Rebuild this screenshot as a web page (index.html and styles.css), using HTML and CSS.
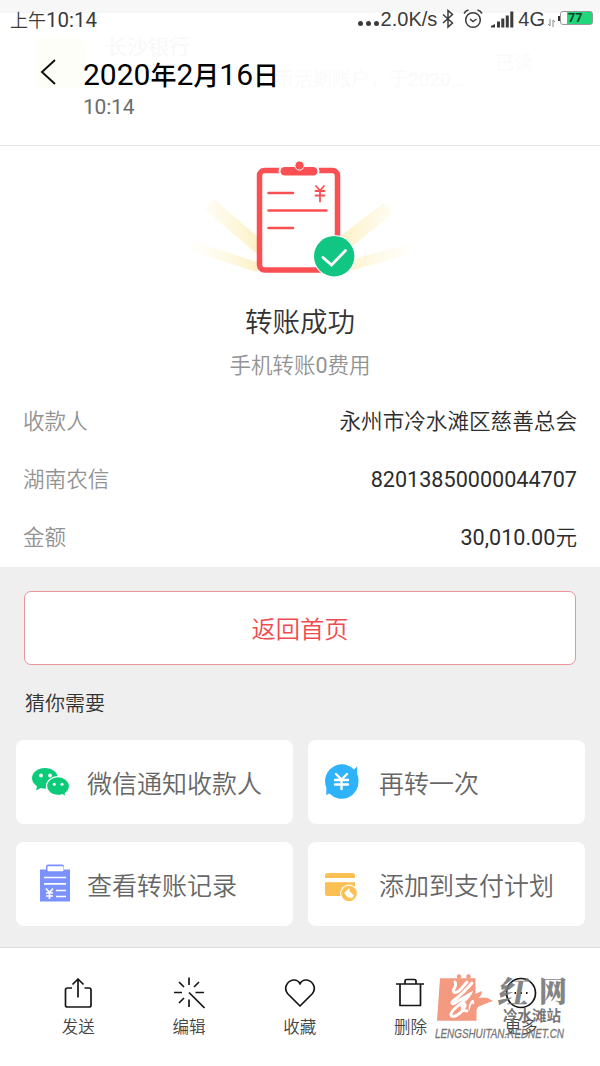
FILE: index.html
```html
<!DOCTYPE html>
<html lang="zh-CN">
<head>
<meta charset="utf-8">
<title>转账成功</title>
<link rel="stylesheet" href="styles.css">
</head>
<body>
<div class="screen">
  <header class="head">
    <div class="ghost" aria-hidden="true">
      <div class="ghost-icon"></div>
      <div class="ghost-title">长沙银行</div>
      <div class="ghost-read">已读</div>
      <div class="ghost-text">币活期账户，于2020...</div>
    </div>
    <div class="status">
      <span class="clock">上午<b>10:14</b></span>
      <span class="dots"><i></i><i></i><i></i></span>
      <span class="speed">2.0K/s</span>
      <svg class="bt" width="12" height="20" viewBox="0 0 12 20"><path d="M1 5.500 10.500 14 6 18V1.500L10.500 5.500 1 14"/></svg>
      <svg class="alarm" width="20" height="20" viewBox="0 0 20 20"><circle cx="10" cy="11" r="7.300"/><path d="M1 4.500C2 2.800 3.500 1.500 5.500 1M19 4.500C18 2.800 16.500 1.500 14.500 1M7 10l3 2.500 3.500-2.500"/></svg>
      <svg class="signal" width="23" height="17" viewBox="0 0 23 17"><path d="M0 16.500v-1.500l4-2v3.500zM6 16.500v-6h3v6zM10.300 16.500v-9h3v9zM14.800 16.500v-12h3v12zM19.300 16.500v-16h3v16z"/></svg>
      <span class="net">4G</span>
      <svg class="arrows" width="7" height="8" viewBox="0 0 7 8"><path d="M2 0v7L0 5M5 8V1l2 2"/></svg>
      <span class="nub"></span>
      <span class="battery"><span class="level">77</span></span>
    </div>
    <div class="titlebar">
      <svg class="back" width="18" height="28" viewBox="0 0 18 28"><path d="M16 2 3 14l13 12"/></svg>
      <div>
        <div class="date"><b>2020</b>年<b>2</b>月<b>16</b>日</div>
        <div class="time">10:14</div>
      </div>
    </div>
  </header>

  <main>
    <section class="result">
      <svg class="art" width="240" height="130" viewBox="0 0 240 130">
        <defs>
          <linearGradient id="rayL" x1="0" x2="1"><stop offset="0" stop-color="#fff8dc" stop-opacity="0"/><stop offset="1" stop-color="#fcf1c6"/></linearGradient>
          <linearGradient id="rayR" x1="1" x2="0"><stop offset="0" stop-color="#fff8dc" stop-opacity="0"/><stop offset="1" stop-color="#fcf1c6"/></linearGradient>
        </defs>
        <path fill="url(#rayL)" d="M24 59 34 49 77 86V104zM7 89 10 101 77 122V112z"/>
        <path fill="url(#rayR)" d="M214 63 203 53 161 86V105zM233 93 236 103 161 123V112z"/>
        <rect x="79.500" y="20.500" width="78" height="99.500" rx="5" fill="#fff" stroke="#fa5054" stroke-width="5.500"/>
        <rect x="98.500" y="14" width="41" height="14" rx="7" fill="#fff"/>
        <circle cx="119.500" cy="15.500" r="5" fill="#fff"/>
        <rect x="100.500" y="17" width="37" height="8.500" rx="4.250" fill="#fa5054"/>
        <circle cx="119.500" cy="15.500" r="4.600" fill="#fa5054" stroke="#fff" stroke-width="1"/>
        <g fill="none" stroke="#fa5054" stroke-width="2.600" stroke-linecap="round"><path d="M88.500 43H113M88.500 60.500H146.500M88.500 78H113"/><path stroke-width="1.800" d="M136 36l4 4.500 4-4.500M140 40.500v11M135.500 41h9M135.500 45.500h9"/></g>
        <circle cx="154.200" cy="106.200" r="21.300" fill="#fff"/>
        <circle cx="154.200" cy="106.200" r="20.200" fill="#11c583"/>
        <path d="M143 107.500l8.500 7.500L165.500 100.500" fill="none" stroke="#fff" stroke-width="2.800" stroke-linecap="round"/>
      </svg>
      <h1>转账成功</h1>
      <p class="fee">手机转账<b>0</b>费用</p>
      <dl class="details">
        <div><dt>收款人</dt><dd>永州市冷水滩区慈善总会</dd></div>
        <div><dt>湖南农信</dt><dd><b>82013850000044707</b></dd></div>
        <div><dt>金额</dt><dd><b>30,010.00</b>元</dd></div>
      </dl>
    </section>

    <section class="next">
      <button class="home">返回首页</button>
      <h2>猜你需要</h2>
      <div class="cards">
        <div class="card"><svg width="48" height="44" viewBox="0 -1.500 48 44"><g fill="#0bcb78"><path d="M21 6.500c7.200 0 13 4.600 13 10.300S28.200 27 21 27c-1.500 0-3-.2-4.300-.6L12 29l1-4.300C10 22.800 8 20 8 16.800 8 11.100 13.800 6.500 21 6.500z"/><path stroke="#fff" stroke-width="1.200" d="M34 15.200c6.400 0 11.500 4.200 11.500 9.400 0 3-1.700 5.600-4.300 7.300l1 3.500-4-2.200c-1.300.4-2.700.7-4.200.7-6.400 0-11.500-4.200-11.500-9.300s5.100-9.400 11.500-9.400z"/></g><g fill="#fff"><circle cx="17" cy="14" r="1.900"/><circle cx="26" cy="14" r="1.900"/><circle cx="30.300" cy="22.700" r="1.500"/><circle cx="38" cy="22.700" r="1.500"/></g></svg><span>微信通知收款人</span></div>
        <div class="card"><svg width="48" height="44" viewBox="0 -1 48 44"><path fill="#2eb3fb" d="M25.500 3.300c5 0 9.300 2 12.400 5.300l3.300-3.100v7.500c1 2.300 1.300 4.300 1.300 7A16.800 16.800 0 0 1 13.500 32.500L10.300 34v-7.500A16.800 16.800 0 0 1 25.500 3.300z"/><path d="M20 13l5.500 5.500 5.500-5.500M25.500 18.500V28M19 19h13M19 23.500h13" fill="none" stroke="#fff" stroke-width="2.400" stroke-linecap="round"/></svg><span>再转一次</span></div>
        <div class="card"><svg width="48" height="44" viewBox="1 0 48 44"><path fill="#7b91fd" d="M17 7.500h6V4.500q0-2 2-2h14q2 0 2 2v3h6v32H17z"/><rect x="24.500" y="4.200" width="16" height="5" rx="1" fill="#fff"/><path d="M21 15.500h22M21 21.800h22M33 28.500h10M33 34.500h10M23 26.500l3.500 4 3.500-4M26.500 30.500v6.500M23 31h7M23 34h7" fill="none" stroke="#fff" stroke-width="1.700"/></svg><span>查看转账记录</span></div>
        <div class="card"><svg width="48" height="44" viewBox="0 0 48 44"><path fill="#fcbf52" d="M9 16v-2.500q0-2.500 2.500-2.500h25q2.500 0 2.500 2.500V16zM9 20.300h30V34H11.500Q9 34 9 31.500z"/><circle cx="33" cy="31.500" r="9" fill="#fff"/><circle cx="33" cy="31.500" r="7.800" fill="#fcbf52"/><path fill="#fff" d="M28 31l5.500-5v3.200l4.500 4.300-2 3-2.500-2v2.500z"/></svg><span>添加到支付计划</span></div>
      </div>
    </section>
  </main>

  <nav class="tabs">
    <div class="tab"><svg width="32" height="32" viewBox="0 0 32 32"><path d="M10 11H5.500Q3.500 11 3.500 13V28.500Q3.500 30 5.500 30H27Q29 30 29 28.500V13Q29 11 27 11h-4.500M16 20.500V2M10.500 7.500 16 2l5.500 5.500"/></svg><span>发送</span></div>
    <div class="tab"><svg width="32" height="32" viewBox="0 0 32 32"><path d="M16 .5v7.500M6 5l5 5M26 5l-5 5M1 15.500h8M22.500 15.500H31M6 26l5-5M16 22.500V30M16 15.500 31.500 31"/></svg><span>编辑</span></div>
    <div class="tab"><svg width="32" height="32" viewBox="0 0 32 32"><path d="M16 29 3.500 16.500C-1.500 9.500 5 3 10 3c3 0 5 1.500 6 4 1-2.500 3-4 6-4 5 0 11.500 6.500 6.500 13.500z"/></svg><span>收藏</span></div>
    <div class="tab"><svg width="32" height="32" viewBox="0 0 32 32"><path d="M2 7H30M11 7V4Q11 2.500 12.500 2.500h7.500Q22 2.500 22 4V7M6 7V28.500H26.500V7"/></svg><span>删除</span></div>
    <div class="tab"><svg width="32" height="32" viewBox="0 0 32 32"><circle cx="16" cy="16" r="14.500"/><path stroke-width="2" d="M9.500 16h1.500M15 16h2M21 16h1.500"/></svg><span>更多</span></div>
  </nav>

  <div class="watermark">
    <svg width="60" height="50" viewBox="0 0 60 50"><path fill="#f49a80" d="M5 5.300h35.500V21l6-3c1 3-1 5-3 7 5-1 9-1 14.500 3-6 2-11 4-15 6l-1.500 3v10.700H2z"/><circle cx="24" cy="3.500" r="2.200" fill="#f49a80"/><circle cx="33.500" cy="3.500" r="2.200" fill="#f49a80"/><path d="M20 9c1 2 1 4-1 7-2 4 2 5 6 1l7-8M37 10C31 17 25 23 18 28c-2 2-1 4 2 2 5-3 11-7 15-9-4 8-17 13-19 20-1 5 10 2 14-8 1-3-3-3-3 0s2 5 5 5" fill="none" stroke="#fff" stroke-width="2.900" stroke-linecap="round"/><path d="M38 31c1-4-1-4-2-1-2 4-2 6-1 6" fill="none" stroke="#fff" stroke-width="1.800"/></svg>
    <div class="brand"><span>红</span><span>网</span></div>
    <div class="station">冷水滩站</div>
    <div class="domain">LENGSHUITAN.REDNET.CN</div>
  </div>
</div>
</body>
</html>
```
FILE: styles.css
```css
* { box-sizing: border-box; margin: 0; padding: 0; }
body {
  width: 600px;
  height: 1066px;
  overflow: hidden;
  background: #fff;
  color: #333;
  font-family: Roboto, "Noto Sans CJK SC", sans-serif;
}
svg { display: block; flex: none; }
.screen { position: relative; display: flex; flex-direction: column; height: 1066px; }

.head {
  position: relative;
  height: 146px;
  border-bottom: 1px solid #e4e4e4;
  background: linear-gradient(#f7f7f7 13px, #fff 13px);
}
.ghost { color: #f8f8f8; }
.ghost-icon { position: absolute; left: 36px; top: 38px; width: 49px; height: 50px; border-radius: 5px; background: #fefef9; }
.ghost-title { position: absolute; left: 106px; top: 33px; font-size: 21px; line-height: 28px; }
.ghost-read { position: absolute; left: 495px; top: 52px; font-size: 19px; line-height: 24px; color: #fafafa; }
.ghost-text { position: absolute; left: 275px; top: 68px; font-size: 19px; line-height: 24px; color: #fafafa; }

.status { position: relative; display: flex; align-items: center; height: 38px; padding: 0 7px 0 10px; color: #3b3b3b; }
.clock { font: 350 18px/38px "Noto Sans CJK SC", sans-serif; margin-right: auto; }
.clock b { font: 400 20.500px/36px Roboto, sans-serif; }
.dots { display: flex; gap: 3px; margin: 8px 2px 0 0; }
.dots i { width: 5px; height: 5px; border-radius: 50%; background: #3b3b3b; }
.speed, .net { font: 20px/38px "Liberation Sans", sans-serif; }
.bt, .alarm { fill: none; stroke: #3b3b3b; stroke-width: 1.500; }
.bt { margin: 0 9px 0 5px; }
.alarm { margin-right: 8px; }
.signal { fill: #3b3b3b; margin-right: 4px; }
.arrows { fill: none; stroke: #888; stroke-width: 1; margin: 7px 3px 0 3px; }
.nub { width: 2px; height: 5px; margin-top: -2px; background: #333; }
.battery {
  display: flex;
  justify-content: flex-end;
  width: 33px;
  height: 14px;
  margin-top: -2px;
  border: 1px solid #999;
  border-radius: 3px;
  background: #fff;
}
.level { width: 25px; padding-left: 1px; background: #22d67c; color: #0b4427; font: bold 12.500px/12px Roboto, sans-serif; }

.titlebar { position: relative; display: flex; padding: 20px 0 0 39px; gap: 26px; }
.back { fill: none; stroke: #111; stroke-width: 2; }
.date { font: 500 26px/32px "Noto Sans CJK SC", sans-serif; color: #000; white-space: nowrap; }
.date b { font: 400 30px/30px Roboto, sans-serif; }
.time { font: 400 21px/30px Roboto, sans-serif; color: #6c6c6c; margin-top: 2px; letter-spacing: -.2px; }

.result { height: 421px; padding-top: 4px; }
.art { margin: 0 auto; }
h1 { font-weight: 350; font-size: 27.500px; line-height: 40px; text-align: center; margin-top: 23px; }
.fee { font-weight: 350; font-size: 21.500px; line-height: 30px; text-align: center; color: #939393; margin-top: 8px; }
.fee b, .details b { font-weight: 400; }
.details { padding: 12px 23px 0; }
.details div { display: flex; justify-content: space-between; height: 58.200px; font-size: 21.600px; line-height: 58px; font-weight: 350; }
dt { color: #939393; }
dd { color: #2c2c2c; }

.next { height: 380px; background: #efefef; padding: 24px 15px 0 16px; }
.home {
  display: block;
  width: 552px;
  height: 74px;
  margin: 0 8px;
  border: 1px solid #eb9599;
  border-radius: 7px;
  background: #fff;
  color: #f04b4e;
  font: 350 24.300px/72px "Noto Sans CJK SC", sans-serif;
}
h2 { font-weight: 350; font-size: 20px; line-height: 30px; margin: 24px 9px 21px; }
.cards { display: grid; grid-template-columns: 277px 277px; gap: 18px 15px; }
.card { display: flex; align-items: center; height: 84px; padding-left: 8px; border-radius: 8px; background: #fff; gap: 15px; }
.card span { color: #666; font: 350 25px/40px "Noto Sans CJK SC", sans-serif; }

.tabs { display: grid; grid-template-columns: repeat(5, 110.700px); padding: 29px 0 0 23px; height: 119px; border-top: 1px solid #dedede; background: #fff; }
.tab { display: flex; flex-direction: column; align-items: center; }
.tab svg { fill: none; stroke: #161616; stroke-width: 1.700; stroke-linejoin: round; }
.tab span { font-size: 16.500px; line-height: 24px; margin-top: 7px; color: #444; font-weight: 350; }

.watermark { position: absolute; left: 435px; top: 973px; width: 135px; height: 70px; color: #777; }
.brand { position: absolute; left: 64px; top: -5px; display: flex; gap: 9px; font: 900 31px/44px "Noto Serif CJK SC", "Noto Sans CJK SC", sans-serif; opacity: .9; }
.brand span:first-child { transform: skewX(-10deg); }
.brand span:last-child { font-size: 28px; }
.station { position: absolute; left: 68px; top: 32px; font: 700 14.500px/20px "Noto Sans CJK SC", sans-serif; white-space: nowrap; }
.domain { position: absolute; left: 0; top: 54px; font: italic 400 12.500px/14px "Liberation Sans", sans-serif; white-space: nowrap; transform: scaleX(.79); transform-origin: left; -webkit-text-stroke: .3px #777; }
```
